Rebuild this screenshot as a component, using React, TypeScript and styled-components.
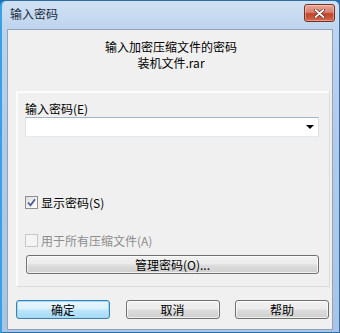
import styled, { createGlobalStyle, css } from "styled-components"

const Global = createGlobalStyle`
  html, body {
    margin: 0;
    padding: 0;
    background: #1f6fb8;
  }
  body {
    font-family: "Noto Sans CJK SC", "Liberation Sans", sans-serif;
    font-size: 12px;
    color: #000;
  }
`

const Window = styled.div`
  width: 340px;
  height: 333px;
  box-sizing: border-box;
  display: flex;
  flex-direction: column;
  border-radius: 6px 6px 0 0;
  border: 1px solid #2b6fa8;
  border-left: 2px solid #3aa0e6;
  background: linear-gradient(180deg, #cfe0f3 0%, #bcd3ec 10%, #b3cbe7 40%, #a9c4e4 100%);
`

const TitleBar = styled.div`
  height: 28px;
  flex: none;
  display: flex;
  align-items: center;
  justify-content: space-between;
  padding: 0 4px 0 8px;
`

const Title = styled.span`
  font-size: 12px;
  color: #1b2a3c;
  line-height: 14px;
  margin-top: -2px;
`

const CloseButton = styled.div`
  width: 29px;
  height: 16px;
  margin-top: -4px;
  border: 1px solid #7a2e22;
  border-radius: 3px;
  background: linear-gradient(180deg, #e7a696 0%, #d8826e 45%, #c3432c 55%, #cf6a4e 100%);
  display: flex;
  align-items: center;
  justify-content: center;
  box-shadow: inset 0 0 0 1px rgba(255, 255, 255, 0.35);
`

const Client = styled.div`
  flex: 1;
  margin: 0 6px 2px 5px;
  background: #f0f0f0;
  border: 1px solid #8ea4bd;
  display: flex;
  flex-direction: column;
  padding: 0 2px 0 8px;
`

const Header = styled.div`
  display: flex;
  flex-direction: column;
  align-items: center;
  padding: 9px 0 0 0;
  height: 52px;
  box-sizing: border-box;
  margin-left: -4px;
  margin-bottom: 9px;
`

const HeaderLine = styled.span`
  line-height: 16px;
  height: 16px;
`

const Panel = styled.div`
  border: 1px solid #fafafa;
  border-right-color: #dcdcdc;
  border-bottom-color: #dcdcdc;
  box-shadow: 1px 1px 0 #fdfdfd inset;
  display: flex;
  flex-direction: column;
  padding: 9px 10px 12px 8px;
  height: 196px;
  box-sizing: border-box;
`

const Label = styled.div`
  line-height: 15px;
  height: 16px;
`

const Combo = styled.div`
  height: 20px;
  box-sizing: border-box;
  border: 1px solid #abadb3;
  border-top-color: #a3b5c9;
  border-bottom-color: #e3e9ef;
  border-left-color: #e2e3ea;
  border-right-color: #dbdfe6;
  background: #fff;
  display: flex;
  align-items: center;
  justify-content: flex-end;
  padding-right: 4px;
`

const Arrow = styled.div`
  width: 0;
  height: 0;
  border-left: 4px solid transparent;
  border-right: 4px solid transparent;
  border-top: 4px solid #000;
`

const CheckRow = styled.div<{ $disabled?: boolean; $gap: number }>`
  display: flex;
  align-items: center;
  gap: 3px;
  margin-top: ${({ $gap }) => $gap}px;
  height: 15px;
  color: ${({ $disabled }) => ($disabled ? "#8d8d8d" : "#000")};
`

const Box = styled.div<{ $disabled?: boolean }>`
  width: 13px;
  height: 13px;
  box-sizing: border-box;
  border: 1px solid ${({ $disabled }) => ($disabled ? "#c8c8c8" : "#8e8f8f")};
  background: ${({ $disabled }) =>
    $disabled ? "#f4f4f4" : "linear-gradient(135deg, #dcdcdc 0%, #f4f4f4 60%, #fff 100%)"};
  display: flex;
  align-items: center;
  justify-content: center;
`

const Spacer = styled.div`
  flex: 1;
`

const buttonBase = css`
  height: 19px;
  box-sizing: border-box;
  border: 1px solid #707070;
  border-radius: 3px;
  background: linear-gradient(180deg, #f2f2f2 0%, #ebebeb 48%, #dddddd 52%, #cfcfcf 100%);
  box-shadow: inset 0 0 0 1px rgba(255, 255, 255, 0.7);
  display: flex;
  align-items: center;
  justify-content: center;
  font-size: 12px;
  line-height: 14px;
  font-family: inherit;
  color: #000;
  padding: 0;
`

const WideButton = styled.button`
  ${buttonBase};
  margin: 0 0 0 1px;
  width: 293px;
`

const ButtonRow = styled.div`
  display: flex;
  justify-content: space-between;
  margin-top: 13px;
  padding-right: 1px;
`

const DialogButton = styled.button<{ $primary?: boolean }>`
  ${buttonBase};
  width: 94px;
  ${({ $primary }) =>
    $primary &&
    css`
      border-color: #3c7fb1;
      background: linear-gradient(180deg, #eaf6fd 0%, #d9f0fc 48%, #bee6fd 52%, #a7d9f5 100%);
      box-shadow: inset 0 0 0 1px #9fdcfb;
    `}
`

function Check() {
  return (
    <svg width="9" height="9" viewBox="0 0 9 9">
      <path d="M1 4.5 L3.5 7.3 L8 1.2" fill="none" stroke="#4a5f97" strokeWidth="1.8" />
    </svg>
  )
}

function CloseX() {
  return (
    <svg width="11" height="9" viewBox="0 0 11 9">
      <path d="M1.5 1 L9.5 8 M9.5 1 L1.5 8" stroke="#4a1a12" strokeWidth="3" strokeLinecap="round" />
      <path d="M1.5 1 L9.5 8 M9.5 1 L1.5 8" stroke="#fff" strokeWidth="1.8" strokeLinecap="round" />
    </svg>
  )
}

export default function App() {
  return (
    <>
      <Global />
      <Window>
        <TitleBar>
          <Title>输入密码</Title>
          <CloseButton>
            <CloseX />
          </CloseButton>
        </TitleBar>
        <Client>
          <Header>
            <HeaderLine>输入加密压缩文件的密码</HeaderLine>
            <HeaderLine>装机文件.rar</HeaderLine>
          </Header>
          <Panel>
            <Label>输入密码(E)</Label>
            <Combo>
              <Arrow />
            </Combo>
            <CheckRow $gap={58}>
              <Box>
                <Check />
              </Box>
              <span>显示密码(S)</span>
            </CheckRow>
            <CheckRow $gap={23} $disabled>
              <Box $disabled />
              <span>用于所有压缩文件(A)</span>
            </CheckRow>
            <Spacer />
            <WideButton>管理密码(O)...</WideButton>
          </Panel>
          <ButtonRow>
            <DialogButton $primary>确定</DialogButton>
            <DialogButton>取消</DialogButton>
            <DialogButton>帮助</DialogButton>
          </ButtonRow>
        </Client>
      </Window>
    </>
  )
}
